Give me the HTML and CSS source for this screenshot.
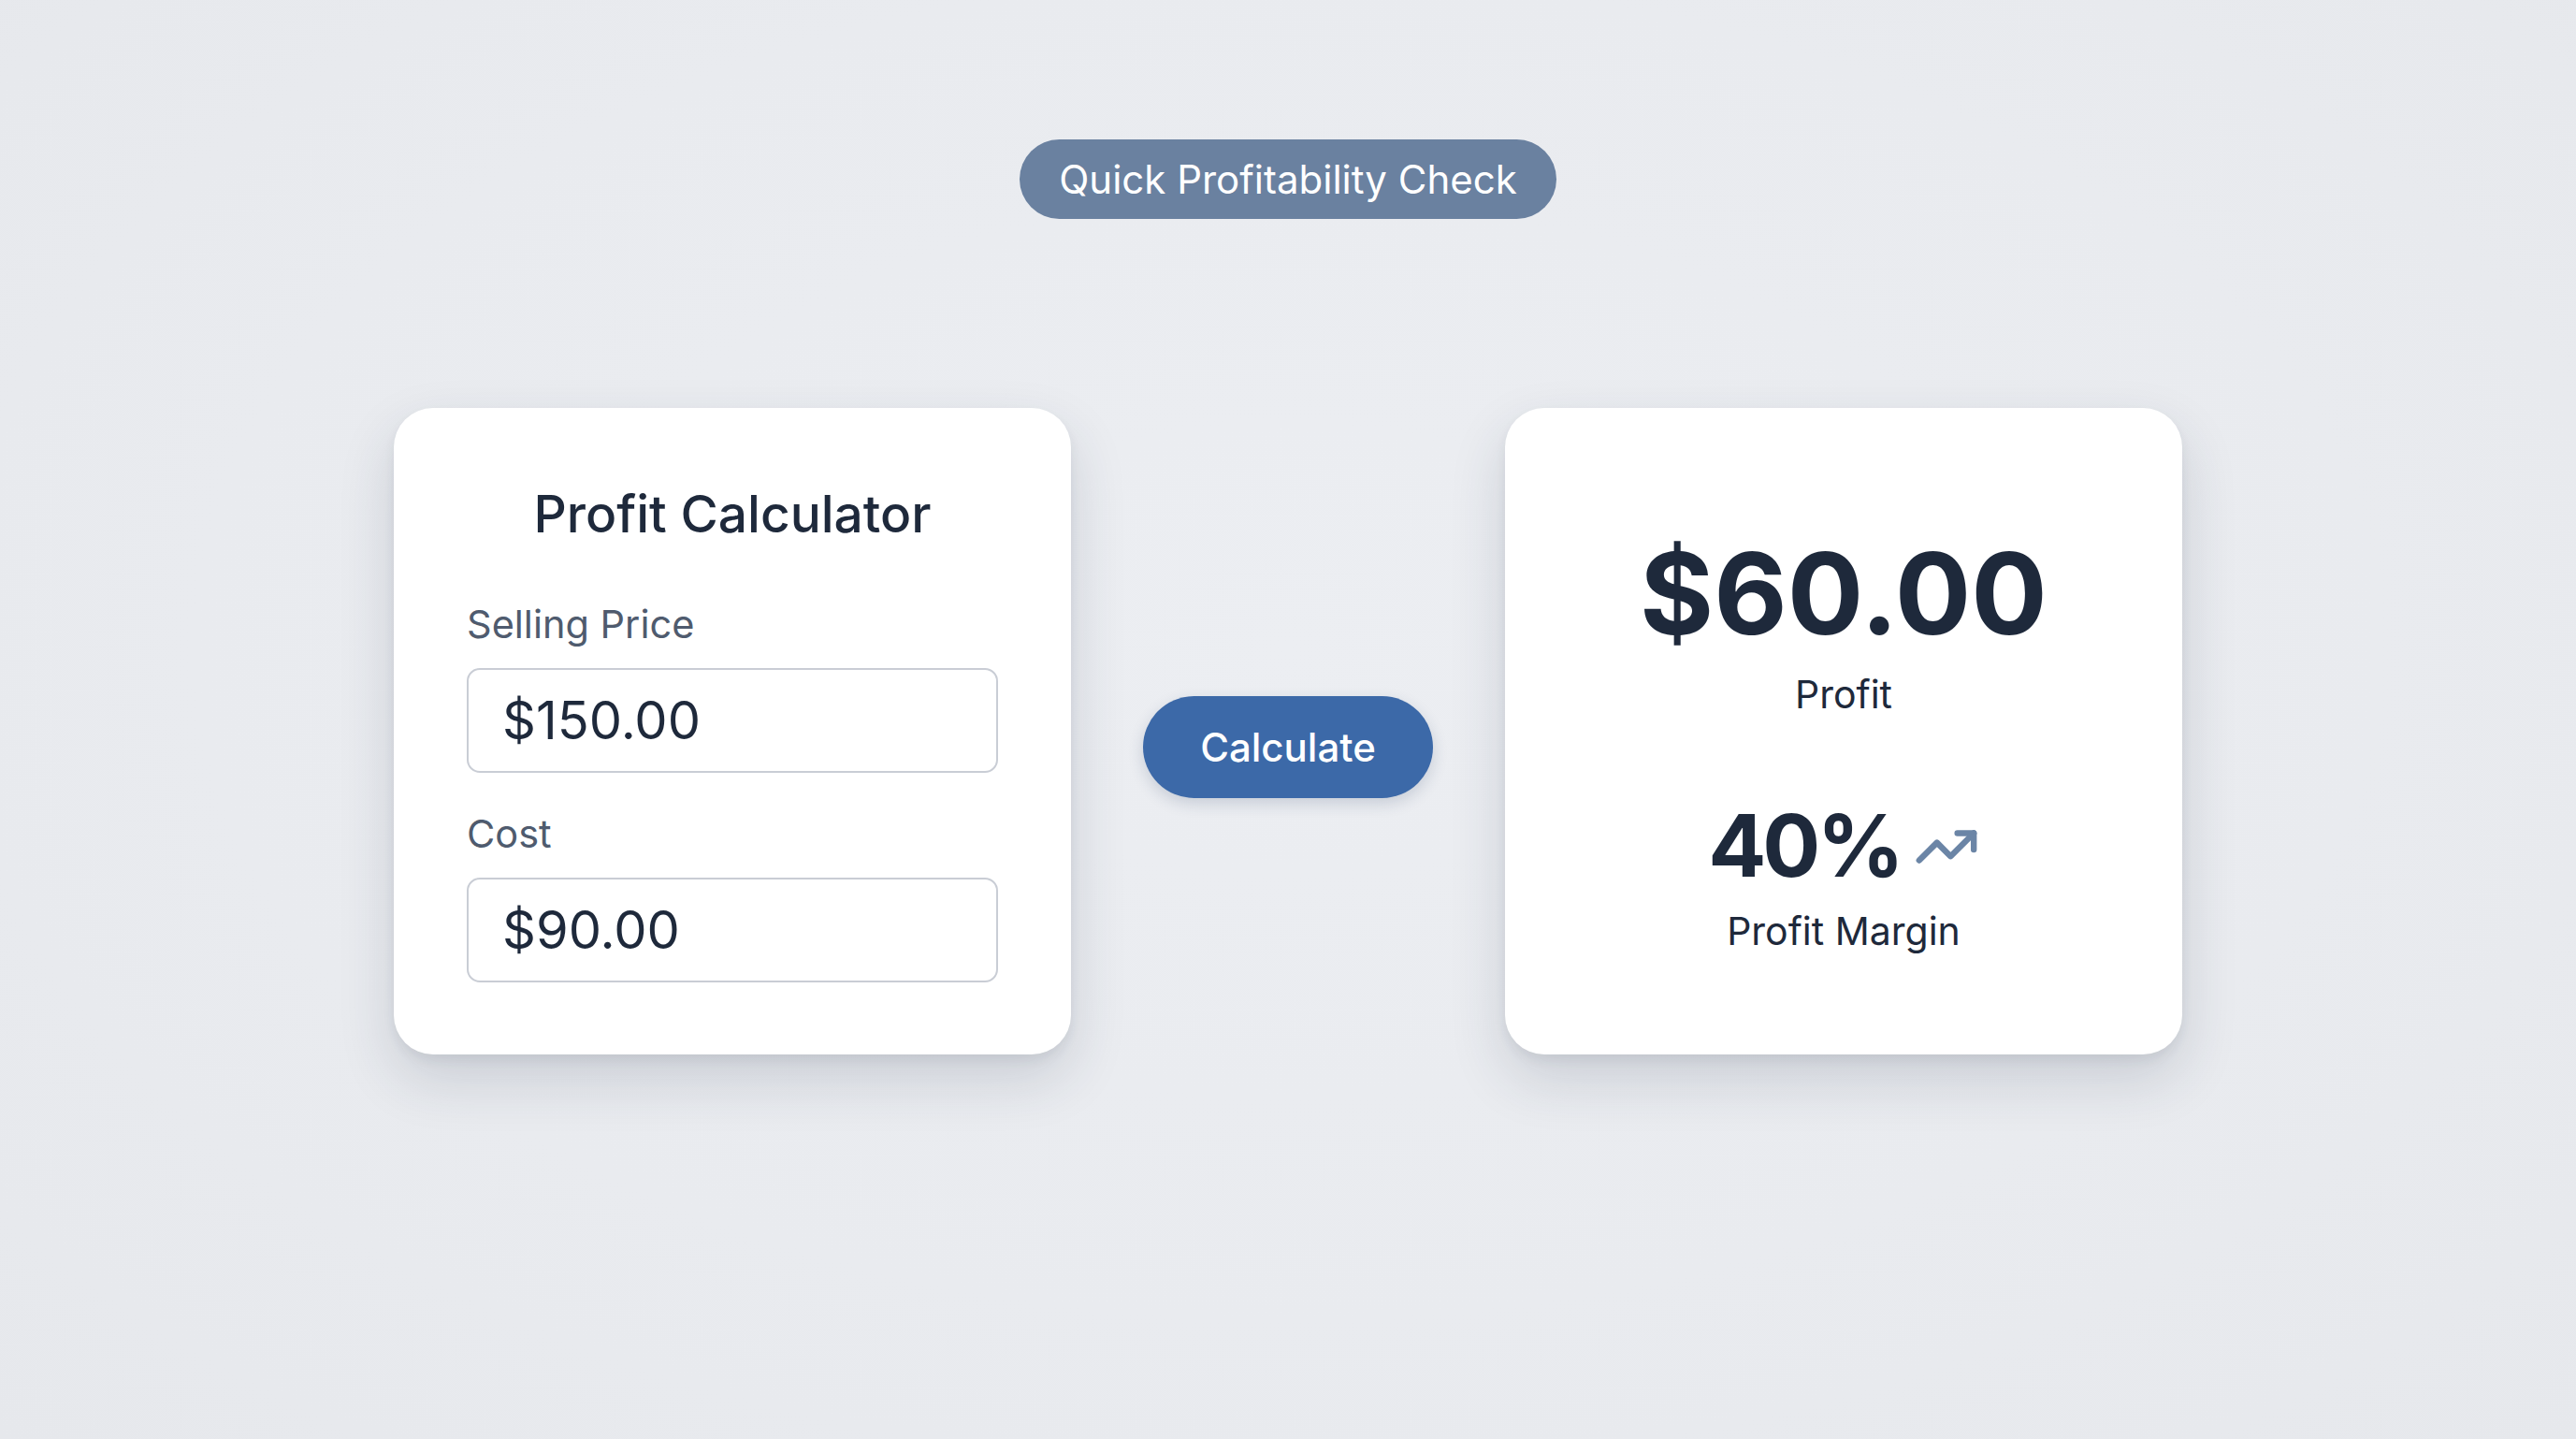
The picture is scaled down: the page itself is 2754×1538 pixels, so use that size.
FILE: index.html
```html
<!DOCTYPE html>
<html lang="en">
<head>
<meta charset="utf-8">
<title>Quick Profitability Check</title>
<link rel="stylesheet" href="styles.css">
</head>
<body>
  <main class="page">
    <div class="pill">Quick Profitability Check</div>
    <section class="row">
      <div class="card calc">
        <h1 class="calc-title">Profit Calculator</h1>
        <label class="field-label">Selling Price</label>
        <div class="field">$150.00</div>
        <label class="field-label field-label--gap">Cost</label>
        <div class="field">$90.00</div>
      </div>
      <button class="calc-btn" type="button">Calculate</button>
      <div class="card result">
        <div class="big-value">$60.00</div>
        <div class="value-label">Profit</div>
        <div class="margin-row">
          <span class="mid-value">40%</span>
          <svg class="trend" viewBox="0 0 24 24" fill="none" stroke="currentColor" stroke-width="2.2" stroke-linecap="round" stroke-linejoin="round">
            <polyline points="22 7 13.5 15.5 8.5 10.5 2 17"></polyline>
            <polyline points="16 7 22 7 22 13"></polyline>
          </svg>
        </div>
        <div class="value-label value-label--margin">Profit Margin</div>
      </div>
    </section>
  </main>
</body>
</html>
```

FILE: styles.css
```css
* { box-sizing: border-box; }

html, body {
  margin: 0;
  padding: 0;
}

body {
  width: 2754px;
  height: 1538px;
  background: radial-gradient(ellipse at 50% 45%, #eceef2 0%, #e9ebef 60%, #e6e8ec 100%);
  font-family: "Inter", "Noto Sans", "Liberation Sans", sans-serif;
  color: #1e293b;
  overflow: hidden;
}

.page {
  display: flex;
  flex-direction: column;
  align-items: center;
  padding-top: 149px;
}

.pill {
  height: 85px;
  padding: 0 42px;
  border-radius: 43px;
  background: #6a81a0;
  color: #ffffff;
  font-size: 42px;
  line-height: 85px;
  font-weight: 400;
}

.row {
  margin-top: 202px;
  display: flex;
  align-items: stretch;
  gap: 77px;
}

.card {
  width: 724px;
  background: #ffffff;
  border-radius: 42px;
  box-shadow: 0 26px 60px rgba(40, 52, 75, 0.16), 0 6px 12px rgba(40, 52, 75, 0.07);
}

.calc {
  display: flex;
  flex-direction: column;
  padding: 80px 78px 77px;
}

.calc-title {
  margin: 0;
  text-align: center;
  font-size: 55px;
  line-height: 67px;
  font-weight: 500;
  color: #1e293b;
}

.field-label {
  display: block;
  margin-top: 60px;
  font-size: 41.5px;
  line-height: 49px;
  color: #4f5b6e;
}

.field-label--gap {
  margin-top: 41px;
}

.field {
  margin-top: 22px;
  height: 112px;
  border: 2px solid #c9cdd5;
  border-radius: 14px;
  padding: 0 36px;
  display: flex;
  align-items: center;
  font-size: 56px;
  color: #1e293b;
}

.calc-btn {
  align-self: center;
  margin-top: 34px;
  width: 310px;
  height: 109px;
  border: none;
  border-radius: 55px;
  background: #3c69a8;
  color: #ffffff;
  font-family: inherit;
  font-size: 42px;
  font-weight: 500;
  box-shadow: 0 6px 16px rgba(40, 60, 100, 0.18);
}

.result {
  display: flex;
  flex-direction: column;
  align-items: center;
  padding-top: 138px;
}

.big-value {
  font-size: 121px;
  line-height: 1;
  font-weight: 700;
  color: #1e293b;
}

.value-label {
  margin-top: 23px;
  font-size: 41px;
  line-height: 1.2;
  color: #1e293b;
}

.value-label--margin {
  margin-top: 20px;
}

.margin-row {
  margin-top: 90px;
  display: flex;
  align-items: center;
  gap: 14px;
  height: 94px;
}

.mid-value {
  font-size: 92px;
  line-height: 1;
  font-weight: 700;
  letter-spacing: -4px;
  color: #1e293b;
}

.trend {
  width: 70px;
  height: 70px;
  color: #6b85a6;
  margin-top: 2px;
}
```
